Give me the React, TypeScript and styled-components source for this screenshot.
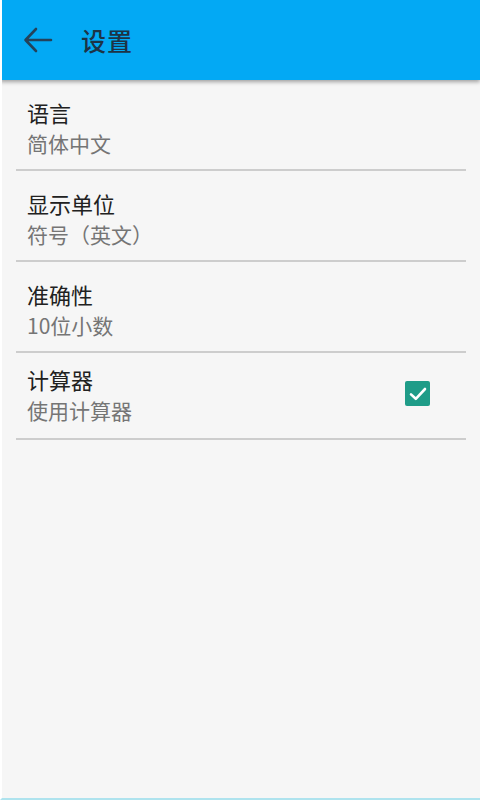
import React from "react";
import styled, { createGlobalStyle } from "styled-components";

const GlobalStyle = createGlobalStyle`
  html, body {
    margin: 0;
    padding: 0;
    background: #f6f6f6;
  }
  body {
    font-family: "Noto Sans CJK SC", "Noto Sans", Roboto, sans-serif;
  }
`;

type Setting = {
  title: string;
  summary: string;
  checkbox?: boolean;
};

const settings: Setting[] = [
  { title: "语言", summary: "简体中文" },
  { title: "显示单位", summary: "符号（英文）" },
  { title: "准确性", summary: "10位小数" },
  { title: "计算器", summary: "使用计算器", checkbox: true },
];

const App: React.FC = () => {
  return (
    <>
      <GlobalStyle />
      <Screen>
        <Toolbar>
          <BackButton aria-label="back">
            <svg width="32" height="32" viewBox="0 0 32 32" fill="none">
              <path
                d="M29 16H4M14 5L3.5 16L14 27"
                stroke="#24425a"
                strokeWidth="2.6"
                strokeLinecap="round"
                strokeLinejoin="round"
              />
            </svg>
          </BackButton>
          <Title>设置</Title>
        </Toolbar>
        <List>
          {settings.map((s) => (
            <Row key={s.title} $compact={s.checkbox}>
              <Texts>
                <RowTitle>{s.title}</RowTitle>
                <Summary>{s.summary}</Summary>
              </Texts>
              {s.checkbox && (
                <CheckBox>
                  <svg width="18" height="16" viewBox="0 0 18 16" fill="none">
                    <path
                      d="M2 8.4L6.8 12.8L16 3"
                      stroke="#ffffff"
                      strokeWidth="2.6"
                      strokeLinecap="round"
                      strokeLinejoin="round"
                    />
                  </svg>
                </CheckBox>
              )}
            </Row>
          ))}
        </List>
      </Screen>
    </>
  );
};

const Screen = styled.div`
  width: 480px;
  height: 800px;
  box-sizing: border-box;
  background: #f6f6f6;
  border-left: 2px solid #ffffff;
  border-bottom: 2px solid #aee3ee;
  overflow: hidden;
`;

const Toolbar = styled.header`
  height: 80px;
  margin-left: -2px;
  background: #03a9f4;
  display: flex;
  align-items: center;
  box-shadow: 0 2px 4px rgba(0, 0, 0, 0.35);
  position: relative;
`;

const BackButton = styled.div`
  width: 32px;
  height: 32px;
  margin-left: 22px;
  display: flex;
  align-items: center;
  justify-content: center;
`;

const Title = styled.h1`
  margin: 0 0 0 27px;
  font-size: 25px;
  font-weight: 500;
  color: #1d3346;
  letter-spacing: 1px;
`;

const List = styled.div`
  display: flex;
  flex-direction: column;
  padding: 0 14px;
`;

const Row = styled.div<{ $compact?: boolean }>`
  display: flex;
  align-items: center;
  justify-content: space-between;
  padding: ${(p) => (p.$compact ? "11px 0 13px 11px" : "17px 0 11px 11px")};
  border-bottom: 2px solid #cdcdcd;
`;

const Texts = styled.div`
  display: flex;
  flex-direction: column;
`;

const RowTitle = styled.div`
  font-size: 22px;
  line-height: 31px;
  color: #212121;
`;

const Summary = styled.div`
  font-size: 21px;
  line-height: 30px;
  color: #757575;
`;

const CheckBox = styled.div`
  width: 25px;
  height: 25px;
  margin-right: 36px;
  margin-top: -2px;
  border-radius: 2px;
  background: #1f9c88;
  display: flex;
  align-items: center;
  justify-content: center;
`;

export default App;
